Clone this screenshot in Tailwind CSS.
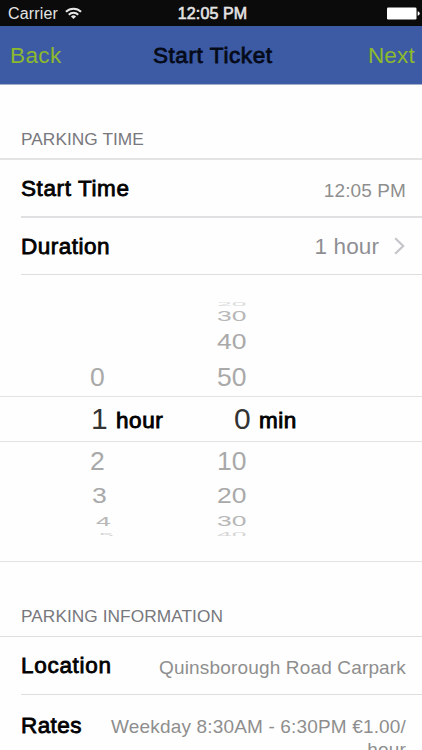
<!DOCTYPE html>
<html lang="en">
<head>
<meta charset="utf-8">
<title>Start Ticket</title>
<script src="https://cdn.jsdelivr.net/npm/@tailwindcss/browser@4"></script>
</head>
<body class="bg-white">
<div class="w-[422px] h-[750px] overflow-hidden bg-[#fefefe] font-['Liberation_Sans',Arial,sans-serif] text-[22.5px] leading-none text-black flex flex-col">
  <header class="shrink-0">
    <div class="h-[26px] bg-[#0b0b0b] text-[#e4e4e4] grid grid-cols-3 items-center pl-2 pr-[3px] pt-[2px] text-[16px]">
      <div class="flex items-center gap-[7px]">
        <span class="tracking-[0.15px]">Carrier</span>
        <svg class="w-[17px] h-[13px] -mt-[2px]" viewBox="0 0 18 13" fill="none" stroke="#e8e8e8" stroke-width="2.1">
          <path d="M1 4.7a11.3 11.3 0 0 1 16 0"/>
          <path d="M4 7.8a7 7 0 0 1 10 0"/>
          <path d="M9 12.4 6.3 9.7a3.9 3.9 0 0 1 5.4 0Z" fill="#e8e8e8" stroke="none"/>
        </svg>
      </div>
      <div class="text-center whitespace-nowrap tracking-[0.1px] -ml-[2px] [-webkit-text-stroke:0.6px]">12:05 PM</div>
      <svg class="justify-self-end w-[33px] h-[13px] -mr-[1px] -mt-[2px]" viewBox="0 0 33 13" fill="#ffffff">
        <rect x="0" y="0.5" width="29.5" height="12" rx="1.3"/>
        <path d="M30.7 4.3q2 .5 2 2.2t-2 2.2Z"/>
      </svg>
    </div>
    <nav class="h-[59px] bg-[#3c5ba4] border-b border-[#a3acc8] flex items-center justify-between pl-[10px] pr-[7px] pt-[3px] text-[#8db92e]">
      <span class="tracking-[0.4px]">Back</span>
      <h1 class="text-[#050a18] tracking-[0.6px] [-webkit-text-stroke:0.8px] -ml-[4px]">Start Ticket</h1>
      <span class="tracking-[0.2px]">Next</span>
    </nav>
  </header>

  <section class="shrink-0">
    <h2 class="h-[73px] pt-[46px] pl-[21px] text-[17.3px] text-[#77777c] tracking-[0.05px]">PARKING TIME</h2>
    <div class="border-t-2 border-[#e3e3e4] pl-[21px]">
      <div class="h-[58px] border-b-2 border-[#e0e0e2] flex items-center justify-between pr-[16px]">
        <span class="tracking-[0.6px] [-webkit-text-stroke:0.8px] pt-[2px]">Start Time</span>
        <span class="text-[19px] tracking-[0.1px] text-[#8e8e8e] pt-[4px]">12:05 PM</span>
      </div>
      <div class="h-[57px] border-b border-[#dededf] flex items-center pr-[17px] pt-[2px]">
        <span class="grow tracking-[0.5px] [-webkit-text-stroke:0.8px]">Duration</span>
        <span class="text-[#8e8e93] tracking-[0.1px]">1 hour</span>
        <svg class="ml-[15px] -mt-[3px] w-[11px] h-[18px]" viewBox="0 0 11 18" fill="none" stroke="#c4c4ca" stroke-width="2.2"><path d="M1.2 1.2 9.2 9l-8 7.8"/></svg>
      </div>
    </div>

    <div class="h-[287px] border-b border-[#e3e3e4] pt-[26px]">
      <div class="h-[235px] overflow-hidden grid grid-rows-[6px_18px_34px_37px_46px_38px_32px_18px_8px] text-[26.5px] text-[#a9a9a9]">
        <div class="flex items-center pl-[217px] text-[#dcdcdc]"><span class="scale-y-[0.2]">20</span></div>
        <div class="flex items-center pl-[217px] text-[#b7b7b7]"><span class="scale-y-[0.54]">30</span></div>
        <div class="flex items-center pl-[217px]"><span class="scale-y-[0.8]">40</span></div>
        <div class="flex items-center"><span class="w-[127px] ml-[90px]">0</span><span>50</span></div>
        <div class="flex items-center border-y border-[#e2e2e2] text-[30px] text-[#333333]">
          <span class="w-[25px] ml-[91px]">1</span>
          <span class="w-[118px] text-[22.5px] text-black tracking-[0.6px] [-webkit-text-stroke:0.9px] pt-[5px]">hour</span>
          <span class="w-[25px]">0</span>
          <span class="text-[22.5px] text-black tracking-[0.5px] [-webkit-text-stroke:0.9px] pt-[5px]">min</span>
        </div>
        <div class="flex items-center"><span class="w-[127px] ml-[90px]">2</span><span>10</span></div>
        <div class="flex items-center pt-px"><span class="w-[125px] ml-[92px] scale-y-[0.8]">3</span><span class="scale-y-[0.8]">20</span></div>
        <div class="flex items-center pt-px text-[#b7b7b7]"><span class="w-[121px] ml-[96px] scale-y-[0.5]">4</span><span class="scale-y-[0.54]">30</span></div>
        <div class="flex items-center pt-[3px] text-[#d6d6d6]"><span class="w-[118px] ml-[99px] scale-y-[0.2]">5</span><span class="scale-y-[0.25]">40</span></div>
      </div>
    </div>
  </section>

  <section class="shrink-0">
    <h2 class="h-[74px] pt-[46px] pl-[21px] text-[17.3px] text-[#77777c] tracking-[0.05px]">PARKING INFORMATION</h2>
    <div class="border-t border-[#dededf] pl-[21px]">
      <div class="h-[58px] border-b border-[#dededf] flex items-center justify-between pr-[16px]">
        <span class="tracking-[0.7px] [-webkit-text-stroke:0.8px] pt-[2px]">Location</span>
        <span class="text-[19px] tracking-[0.16px] text-[#8e8e8e] pt-[3px]">Quinsborough Road Carpark</span>
      </div>
      <div class="h-[80px] flex justify-between pr-[16px] pt-[20px]">
        <span class="tracking-[0.4px] [-webkit-text-stroke:0.8px]">Rates</span>
        <span class="text-[19px] tracking-[0.16px] leading-[23px] text-[#8e8e8e] text-right whitespace-nowrap">Weekday 8:30AM - 6:30PM €1.00/<br>hour</span>
      </div>
    </div>
  </section>
</div>
</body>
</html>
